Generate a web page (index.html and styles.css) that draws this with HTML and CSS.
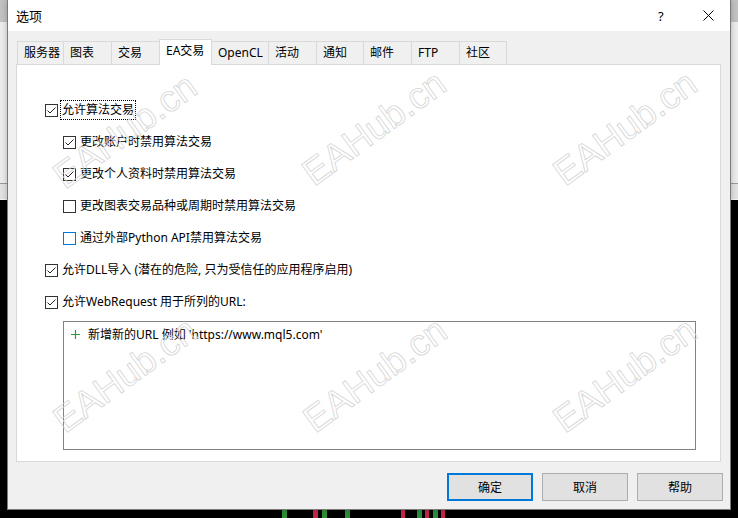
FILE: index.html
```html
<!DOCTYPE html>
<html lang="zh-CN">
<head>
<meta charset="utf-8">
<title>选项</title>
<link rel="stylesheet" href="styles.css">
</head>
<body>
<div class="dialog">
  <div class="titlebar">
    <span class="title">选项</span>
    <span class="help">?</span>
    <svg class="close" width="11" height="11" viewBox="0 0 11 11"><path d="M0.5 0.5 L10.5 10.5 M10.5 0.5 L0.5 10.5" stroke="#000" stroke-width="1" fill="none"/></svg>
  </div>
  <div class="body">
    <div class="tabs">
      <div class="tab w47">服务器</div>
      <div class="tab">图表</div>
      <div class="tab">交易</div>
      <div class="tab active">EA交易</div>
      <div class="tab w57">OpenCL</div>
      <div class="tab">活动</div>
      <div class="tab w47">通知</div>
      <div class="tab">邮件</div>
      <div class="tab">FTP</div>
      <div class="tab w47">社区</div>
    </div>
    <div class="panel">
      <div class="opt">
        <span class="cb checked"><svg width="11" height="11" viewBox="0 0 11 11"><path d="M1.5 5.5 L4 8 L9.5 2.5" stroke="#222" stroke-width="1" fill="none"/></svg></span>
        <span class="label focus">允许算法交易</span>
      </div>
      <div class="opt sub">
        <span class="cb checked"><svg width="11" height="11" viewBox="0 0 11 11"><path d="M1.5 5.5 L4 8 L9.5 2.5" stroke="#222" stroke-width="1" fill="none"/></svg></span>
        <span class="label">更改账户时禁用算法交易</span>
      </div>
      <div class="opt sub">
        <span class="cb checked"><svg width="11" height="11" viewBox="0 0 11 11"><path d="M1.5 5.5 L4 8 L9.5 2.5" stroke="#222" stroke-width="1" fill="none"/></svg></span>
        <span class="label">更改个人资料时禁用算法交易</span>
      </div>
      <div class="opt sub">
        <span class="cb"></span>
        <span class="label">更改图表交易品种或周期时禁用算法交易</span>
      </div>
      <div class="opt sub">
        <span class="cb hover"></span>
        <span class="label">通过外部Python API禁用算法交易</span>
      </div>
      <div class="opt">
        <span class="cb checked"><svg width="11" height="11" viewBox="0 0 11 11"><path d="M1.5 5.5 L4 8 L9.5 2.5" stroke="#222" stroke-width="1" fill="none"/></svg></span>
        <span class="label">允许DLL导入 (潜在的危险, 只为受信任的应用程序启用)</span>
      </div>
      <div class="opt">
        <span class="cb checked"><svg width="11" height="11" viewBox="0 0 11 11"><path d="M1.5 5.5 L4 8 L9.5 2.5" stroke="#222" stroke-width="1" fill="none"/></svg></span>
        <span class="label">允许WebRequest 用于所列的URL:</span>
      </div>
      <div class="urllist">
        <div class="urlitem">
          <svg class="plus" width="9" height="9" viewBox="0 0 9 9"><path d="M4.5 0 V9 M0 4.5 H9" stroke="#2f9a3a" stroke-width="1.2" fill="none"/></svg>
          <span>新增新的URL 例如 'https://www.mql5.com'</span>
        </div>
      </div>
    </div>
    <div class="buttons">
      <button class="btn default">确定</button>
      <button class="btn">取消</button>
      <button class="btn">帮助</button>
    </div>
  </div>
  <div class="watermarks">
    <span class="wm wm1">EAHub.cn</span>
    <span class="wm wm2">EAHub.cn</span>
    <span class="wm wm3">EAHub.cn</span>
    <span class="wm wm4">EAHub.cn</span>
    <span class="wm wm5">EAHub.cn</span>
    <span class="wm wm6">EAHub.cn</span>
  </div>
</div>
<div class="ticks"></div>
</body>
</html>
```
FILE: styles.css
```css
html, body {
  margin: 0;
  padding: 0;
}
body {
  width: 738px;
  height: 518px;
  overflow: hidden;
  background-color: #000;
  background-image: linear-gradient(to bottom, #c2c2c2 0 22px, #ececec 22px 183px, #9a9a9a 183px 184px, #e2e2e2 184px 199px, #f4f4f4 199px 200px, #000 200px);
  font-family: "Noto Sans", "Noto Sans CJK SC", sans-serif;
  font-size: 12px;
  color: #000;
}
.dialog {
  position: relative;
  margin-left: 7px;
  width: 724px;
  height: 510px;
  box-sizing: border-box;
  border: 1px solid #7a7a7a;
  border-top: none;
  background: #f0f0f0;
  display: flex;
  flex-direction: column;
  box-shadow: 0 0 6px rgba(0,0,0,0.25);
}
.titlebar {
  height: 31px;
  background: #fff;
  display: flex;
  align-items: center;
  padding-left: 8px;
  flex: none;
}
.title {
  font-size: 13px;
  line-height: 16px;
  flex: 1;
}
.help {
  font-size: 13px;
  width: 10px;
  margin-right: 35px;
  line-height: 16px;
}
.close {
  margin-right: 16px;
}
.body {
  flex: 1;
  padding: 0 7px 0 8px;
  display: flex;
  flex-direction: column;
}
.tabs {
  display: flex;
  align-items: flex-end;
  height: 25px;
  margin-top: 8px;
  margin-left: 1px;
  position: relative;
  z-index: 2;
}
.tab {
  width: 48px;
  height: 23px;
  box-sizing: border-box;
  border: 1px solid #d9d9d9;
  border-bottom: none;
  border-left: none;
  background: #f0f0f0;
  padding-left: 6px;
  line-height: 22px;
  white-space: nowrap;
}
.tab:first-child {
  border-left: 1px solid #d9d9d9;
}
.tab.w47 { width: 47px; }
.tab.w57 { width: 57px; }
.tab.active {
  width: 53px;
  height: 26px;
  margin-bottom: -1px;
  background: #fff;
  border-left: 1px solid #d9d9d9;
  margin-left: -1px;
  padding-left: 6px;
  line-height: 21px;
}
.panel {
  height: 398px;
  box-sizing: border-box;
  margin-right: 2px;
  background: #fff;
  border: 1px solid #d9d9d9;
  padding: 29px 0 0 28px;
  flex: none;
}
.opt {
  display: flex;
  align-items: center;
  height: 32px;
}
.opt.sub {
  padding-left: 18px;
}
.cb {
  width: 13px;
  height: 13px;
  box-sizing: border-box;
  border: 1px solid #333;
  background: #fff;
  display: flex;
  align-items: center;
  justify-content: center;
  flex: none;
}
.cb.hover {
  border-color: #0078d7;
}
.label {
  margin-left: 2px;
  padding: 1px 1px;
  line-height: 16px;
  border: 1px dotted transparent;
  white-space: nowrap;
}
.label.focus {
  border-color: #000;
}
.urllist {
  margin-top: 3px;
  margin-left: 18px;
  width: 633px;
  height: 129px;
  box-sizing: border-box;
  border: 1px solid #828282;
  background: #fff;
}
.urlitem {
  display: flex;
  align-items: center;
  height: 16px;
  margin-top: 4px;
  padding-left: 7px;
  white-space: nowrap;
}
.plus {
  margin-right: 8px;
}
.buttons {
  display: flex;
  justify-content: flex-end;
  gap: 9px;
  margin-top: 11px;
}
.btn {
  width: 86px;
  height: 28px;
  box-sizing: border-box;
  border: 1px solid #adadad;
  background: #e1e1e1;
  font-family: "Noto Sans", "Noto Sans CJK SC", sans-serif;
  font-size: 12px;
  color: #000;
  padding: 0;
}
.btn.default {
  border: 2px solid #0078d7;
}
.watermarks {
  position: absolute;
  inset: 0;
  pointer-events: none;
  z-index: 5;
}
.wm {
  position: absolute;
  font-family: "Liberation Sans", Arial, sans-serif;
  font-size: 37px;
  line-height: 37px;
  color: transparent;
  -webkit-text-stroke: 0.8px #d4d4d4;
  white-space: nowrap;
  transform: translate(-50%, -50%) rotate(-36deg);
}
.wm1 { left: 117px; top: 131px; }
.wm2 { left: 366px; top: 128px; }
.wm3 { left: 617px; top: 128px; }
.wm4 { left: 117px; top: 375px; }
.wm5 { left: 367px; top: 375px; }
.wm6 { left: 617px; top: 375px; }
.ticks {
  height: 8px;
  background:
    linear-gradient(#2f8f3a, #2f8f3a) 282px 0 / 5px 8px no-repeat,
    linear-gradient(#c8254a, #c8254a) 313px 0 / 5px 8px no-repeat,
    linear-gradient(#2f8f3a, #2f8f3a) 322px 0 / 5px 8px no-repeat,
    linear-gradient(#2f8f3a, #2f8f3a) 345px 0 / 5px 8px no-repeat,
    linear-gradient(#c8254a, #c8254a) 401px 0 / 4px 8px no-repeat,
    linear-gradient(#2f8f3a, #2f8f3a) 417px 0 / 5px 8px no-repeat,
    linear-gradient(#c8254a, #c8254a) 425px 0 / 4px 8px no-repeat,
    linear-gradient(#2f8f3a, #2f8f3a) 433px 0 / 5px 8px no-repeat,
    linear-gradient(#c8254a, #c8254a) 441px 0 / 4px 8px no-repeat;
}
```
